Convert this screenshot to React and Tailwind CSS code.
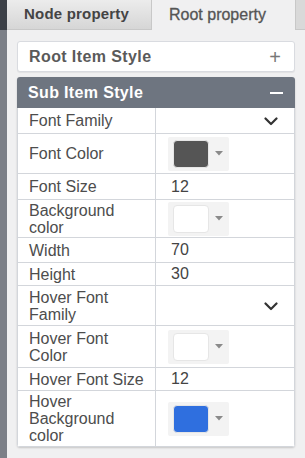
import React from "react";

const Caret = () => (
  <svg width="8" height="5" viewBox="0 0 8 5" className="ml-[6px]">
    <path d="M0 0 L8 0 L4 4.5 Z" fill="#8a8a8a" />
  </svg>
);

const Chevron = () => (
  <svg width="14" height="9" viewBox="0 0 14 9">
    <path d="M1.5 1.5 L7 7 L12.5 1.5" fill="none" stroke="#333" strokeWidth="2.2" strokeLinecap="round" strokeLinejoin="round" />
  </svg>
);

const Swatch = ({ color }) => (
  <div className="ml-[12px] flex h-[34px] w-[61px] items-center rounded-[2px] bg-[#f3f3f3] pl-[5px]">
    <div className="h-[28px] w-[36px] rounded-[4px] border border-[#e6e6e6]" style={{ background: color }} />
    <Caret />
  </div>
);

const rows = [
  { label: ["Font Family"], h: "h-[25px]", type: "select" },
  { label: ["Font Color"], h: "h-[40px]", type: "color", color: "#555555" },
  { label: ["Font Size"], h: "h-[26px]", type: "text", value: "12" },
  { label: ["Background", "color"], h: "h-[38px]", type: "color", color: "#ffffff" },
  { label: ["Width"], h: "h-[25px]", type: "text", value: "70" },
  { label: ["Height"], h: "h-[23px]", type: "text", value: "30" },
  { label: ["Hover Font", "Family"], h: "h-[40px]", type: "select" },
  { label: ["Hover Font", "Color"], h: "h-[42px]", type: "color", color: "#ffffff" },
  { label: ["Hover Font Size"], h: "h-[23px]", type: "text", value: "12" },
  { label: ["Hover", "Background", "color"], h: "h-[56px]", type: "color", color: "#2f6fdf" },
];

export default function App() {
  return (
    <div className="flex h-[458px] w-[305px] overflow-hidden bg-[#f0f0f1] font-['Liberation_Sans',Arial,sans-serif]">
      <div className="flex w-[7px] flex-col">
        <div className="h-[30px] bg-[#3c4047]" />
        <div className="flex-1 bg-[#7b7f87]" />
      </div>
      <div className="flex flex-1 flex-col">
        <div className="flex h-[30px]">
          <div className="flex w-[145px] items-center border-b border-r border-[#c8c8c8] bg-gradient-to-b from-[#ececec] to-[#d6d6d6] pl-[17px] text-[15px] font-bold tracking-[0.2px] text-[#444]">
            Node property
          </div>
          <div className="flex w-[143px] items-center bg-[#f0f0f1] pl-[17px] text-[16px] text-[#555] [-webkit-text-stroke:0.3px_#555]">
            Root property
          </div>
          <div className="flex-1 border-b border-l border-[#c8c8c8] bg-[#d9d9d9]" />
        </div>
        <div className="flex flex-col px-[10px] pt-[11px]">
          <div className="flex h-[31px] items-center justify-between rounded-[3px] border border-[#d9dbe0] bg-white pl-[11px] pr-[13px] shadow-[0_1px_1px_rgba(0,0,0,0.06)]">
            <span className="text-[16px] font-bold tracking-[0.4px] text-[#5a5a5a]">Root Item Style</span>
            <span className="text-[20px] leading-none text-[#777]">+</span>
          </div>
          <div className="mt-[5px] overflow-hidden rounded-[3px] shadow-[0_1px_2px_rgba(0,0,0,0.18)]">
            <div className="flex h-[31px] items-center justify-between bg-[#6e7580] pl-[11px] pr-[12px]">
              <span className="text-[16px] font-bold tracking-[0.35px] text-white">Sub Item Style</span>
              <div className="h-[2px] w-[13px] bg-white" />
            </div>
            <div className="border-x border-b border-[#d3d6db] bg-white">
              {rows.map((r, i) => (
                <div key={i} className={`flex ${r.h} ${i > 0 ? "border-t border-[#d3d6db]" : ""}`}>
                  <div className="flex w-[138px] shrink-0 flex-col justify-center border-r border-[#d3d6db] pl-[11px] text-[16px] leading-[17px] text-[#4d4d4d]">
                    {r.label.map((l, j) => (
                      <span key={j} className="whitespace-nowrap">{l}</span>
                    ))}
                  </div>
                  <div className="flex flex-1 items-center">
                    {r.type === "select" && (
                      <div className="flex w-full justify-end pr-[16px] pt-[2px]">
                        <Chevron />
                      </div>
                    )}
                    {r.type === "text" && (
                      <span className="pl-[15px] text-[16px] text-[#444]">{r.value}</span>
                    )}
                    {r.type === "color" && <Swatch color={r.color} />}
                  </div>
                </div>
              ))}
            </div>
          </div>
        </div>
      </div>
    </div>
  );
}
